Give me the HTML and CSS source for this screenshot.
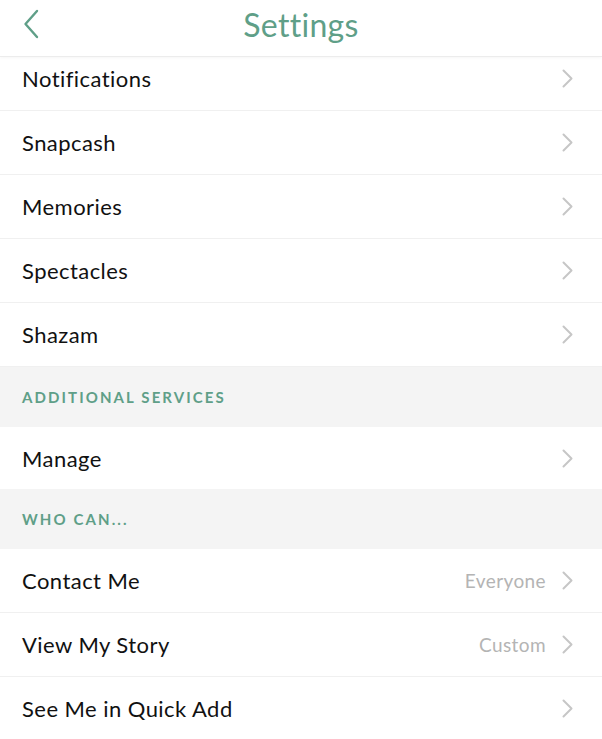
FILE: index.html
```html
<!DOCTYPE html>
<html lang="en">
<head>
    <meta charset="UTF-8">
    <meta name="viewport" content="width=device-width, initial-scale=1.0">
    <title>Settings</title>
    <link rel="stylesheet" href="styles.css">
</head>
<body>
    <header class="top-bar">
        <a href="#" class="back-link" aria-label="Back">
            <svg width="16" height="30" viewBox="0 0 16 30">
                <polyline points="14,2 2.5,15 14,28" fill="none" stroke="#5f9f88" stroke-width="2.4" stroke-linecap="round" stroke-linejoin="round"/>
            </svg>
        </a>
        <h1 class="title">Settings</h1>
    </header>

    <ul class="settings-list">
        <li class="row row-first"><span class="label">Notifications</span><span class="chevron"></span></li>
        <li class="row"><span class="label">Snapcash</span><span class="chevron"></span></li>
        <li class="row"><span class="label">Memories</span><span class="chevron"></span></li>
        <li class="row"><span class="label">Spectacles</span><span class="chevron"></span></li>
        <li class="row"><span class="label">Shazam</span><span class="chevron"></span></li>
        <li class="section">Additional Services</li>
        <li class="row row-short"><span class="label">Manage</span><span class="chevron"></span></li>
        <li class="section">Who Can...</li>
        <li class="row"><span class="label">Contact Me</span><span class="value">Everyone</span><span class="chevron"></span></li>
        <li class="row"><span class="label">View My Story</span><span class="value">Custom</span><span class="chevron"></span></li>
        <li class="row"><span class="label">See Me in Quick Add</span><span class="chevron"></span></li>
    </ul>
</body>
</html>
```

FILE: styles.css
```css
* {
    margin: 0;
    padding: 0;
    box-sizing: border-box;
}

body {
    font-family: 'Lato', 'Open Sans', sans-serif;
    background-color: white;
    width: 602px;
    height: 739px;
    overflow: hidden;
}

.top-bar {
    position: relative;
    height: 57px;
    display: flex;
    align-items: center;
    justify-content: center;
    border-bottom: 1px solid #ececec;
    box-shadow: 0 1px 3px rgba(0, 0, 0, 0.04);
    z-index: 1;
}

.back-link {
    position: absolute;
    left: 23px;
    top: 9px;
    display: block;
    line-height: 0;
}

.title {
    font-size: 32px;
    font-weight: 400;
    color: #5f9f88;
    letter-spacing: 0.3px;
    margin-top: -8px;
}

.settings-list {
    list-style: none;
}

.row {
    display: flex;
    align-items: center;
    height: 64px;
    padding: 0 29px 0 22px;
    border-bottom: 1px solid #f0f0f0;
    font-size: 22px;
    letter-spacing: 0.45px;
    color: #111;
}

.row-first {
    height: 54px;
    padding-bottom: 10px;
}

.row-short {
    height: 62px;
    border-bottom: none;
}

.label {
    flex: 1;
}

.value {
    font-size: 19px;
    color: #b4b4b4;
    margin-right: 16px;
    letter-spacing: 0.4px;
}

.chevron {
    width: 11px;
    height: 19px;
    background: no-repeat center / 11px 19px url("data:image/svg+xml,%3Csvg xmlns='http://www.w3.org/2000/svg' viewBox='0 0 11 19'%3E%3Cpolyline points='1.5,1.5 9.5,9.5 1.5,17.5' fill='none' stroke='%23c6c6c6' stroke-width='2' stroke-linecap='round' stroke-linejoin='round'/%3E%3C/svg%3E");
}

.section {
    height: 60px;
    display: flex;
    align-items: center;
    padding: 0 22px;
    background-color: #f4f4f4;
    color: #5f9f88;
    font-size: 15px;
    font-weight: 700;
    letter-spacing: 2.1px;
    text-transform: uppercase;
}
```
